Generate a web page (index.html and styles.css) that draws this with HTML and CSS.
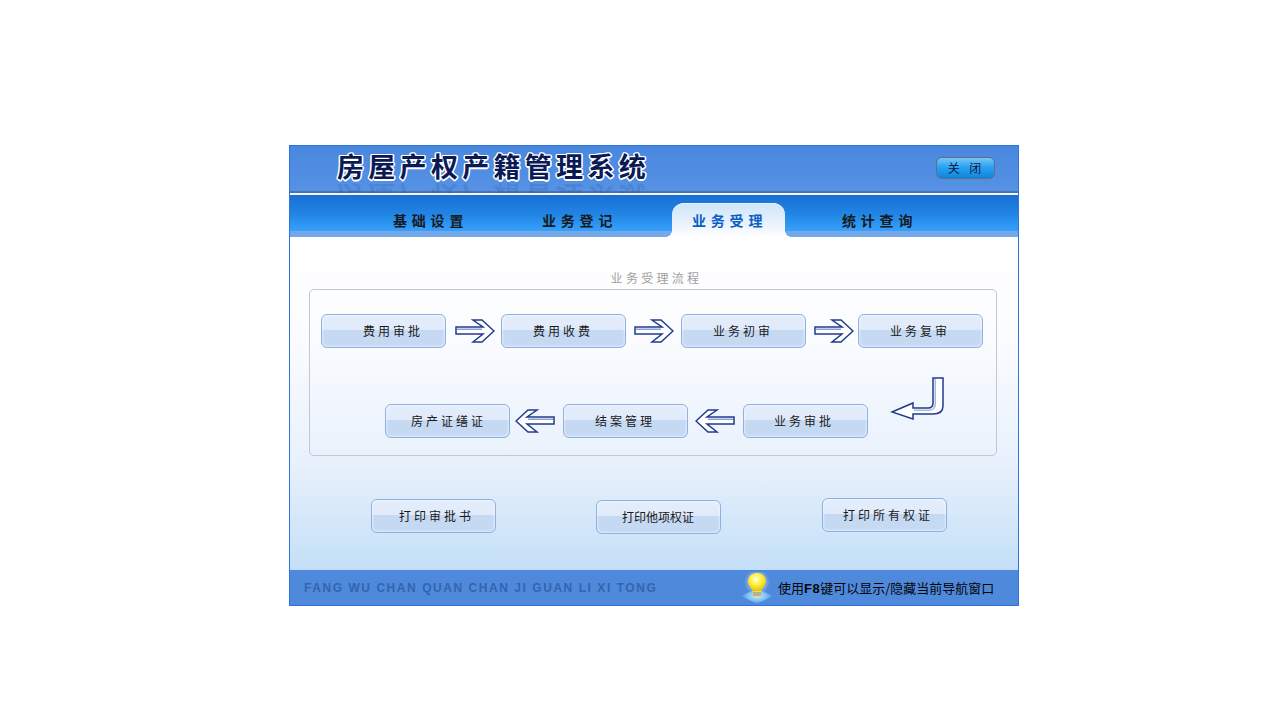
FILE: index.html
```html
<!DOCTYPE html>
<html lang="zh-CN">
<head>
<meta charset="utf-8">
<title>房屋产权产籍管理系统</title>
<link rel="stylesheet" href="styles.css">
</head>
<body>
<svg class="defs" width="0" height="0" aria-hidden="true">
  <symbol id="arrow-right" viewBox="0 0 40 24">
    <path d="M1 8H28L18 1H27L39 12L27 23H18L28 15H1Z" fill="#fff" stroke="#1f3b8c" stroke-width="1.5" stroke-linejoin="miter"/>
    <path d="M2 9.500H27V11H2Z" fill="#8c9fd0"/>
  </symbol>
  <symbol id="arrow-left" viewBox="0 0 40 24">
    <path d="M39 8H12L22 1H13L1 12L13 23H22L12 15H39Z" fill="#fff" stroke="#1f3b8c" stroke-width="1.5" stroke-linejoin="miter"/>
    <path d="M38 9.500H13V11H38Z" fill="#8c9fd0"/>
  </symbol>
</svg>
<div class="window">
  <header class="header">
    <h1 class="title" data-text="房屋产权产籍管理系统">房屋产权产籍管理系统</h1>
    <button class="close">关 闭</button>
  </header>
  <nav class="nav">
    <a class="tab tab-1">基础设置</a>
    <a class="tab tab-2">业务登记</a>
    <a class="tab active">业务受理</a>
    <a class="tab tab-4">统计查询</a>
  </nav>
  <main class="main">
    <div class="panel-title">业务受理流程</div>
    <section class="panel">
      <div class="flow-row">
        <div class="btn p42">费用审批</div>
        <svg class="arrow a1"><use href="#arrow-right"/></svg>
        <div class="btn">费用收费</div>
        <svg class="arrow a2"><use href="#arrow-right"/></svg>
        <div class="btn">业务初审</div>
        <svg class="arrow a3"><use href="#arrow-right"/></svg>
        <div class="btn">业务复审</div>
      </div>
      <div class="flow-row second">
        <div class="btn p26">房产证缮证</div>
        <svg class="arrow a4"><use href="#arrow-left"/></svg>
        <div class="btn">结案管理</div>
        <svg class="arrow a5"><use href="#arrow-left"/></svg>
        <div class="btn p31">业务审批</div>
        <svg class="bent" viewBox="0 0 56 44">
          <path d="M43 2H53V30Q53 38 43 38H23V43L2 36L23 27V32H38Q43 32 43 27Z" fill="#fff" stroke="#1f3b8c" stroke-width="1.500"/>
          <path d="M44.500 3H46V28Q46 34 39 35H24V33.500H38Q44.500 33.500 44.500 28Z" fill="#a9b8de"/>
        </svg>
      </div>
    </section>
    <div class="print-row">
      <div class="btn p28 o1">打印审批书</div>
      <div class="btn p26 tight o2">打印他项权证</div>
      <div class="btn p21 o3">打印所有权证</div>
    </div>
  </main>
  <footer class="footer">
    <span class="pinyin">FANG WU CHAN QUAN CHAN JI GUAN LI XI TONG</span>
    <svg class="bulb" viewBox="0 0 32 32" aria-hidden="true">
      <defs>
        <radialGradient id="glass" cx="45%" cy="35%" r="65%">
          <stop offset="0" stop-color="#fffde0"/>
          <stop offset=".5" stop-color="#fff03a"/>
          <stop offset="1" stop-color="#e5c400"/>
        </radialGradient>
        <radialGradient id="plate">
          <stop offset="0" stop-color="#c4ecff"/>
          <stop offset=".6" stop-color="#7cc0f2"/>
          <stop offset="1" stop-color="#4e89dc"/>
        </radialGradient>
        <radialGradient id="halo">
          <stop offset=".6" stop-color="#fff" stop-opacity=".35"/>
          <stop offset="1" stop-color="#fff" stop-opacity="0"/>
        </radialGradient>
      </defs>
      <circle cx="16" cy="10" r="13" fill="url(#halo)"/>
      <path d="M0 24L16 16L32 24L16 32Z" fill="url(#plate)"/>
      <path d="M16 1C10.500 1 7 5 7 9.500C7 13.500 10.500 15 11.500 19H20.500C21.500 15 25 13.500 25 9.500C25 5 21.500 1 16 1Z" fill="url(#glass)"/>
      <path d="M11.500 19H20.500L20 25Q16 27 12 25Z" fill="#d8d9ae"/>
      <path d="M12 21H20M12 23H20" stroke="#8d9270"/>
    </svg>
    <span class="hint">使用<b>F8</b>键可以显示/隐藏当前导航窗口</span>
  </footer>
</div>
</body>
</html>
```
FILE: styles.css
```css
* { box-sizing: border-box; }
html, body { margin: 0; height: 100%; background: #fff; }
body {
  padding: 145px 0 0 289px;
  font-family: "Liberation Sans", "Noto Sans CJK SC", sans-serif;
  font-size: 12px;
  color: #111;
}
.defs { display: block; }
.window {
  width: 730px;
  height: 461px;
  border: 1px solid #2d73dd;
  display: flex;
  flex-direction: column;
  background: #fff;
}
.header {
  position: relative;
  flex: none;
  height: 49px;
  padding: 0 23px 0 47px;
  display: flex;
  justify-content: space-between;
  align-items: flex-start;
  overflow: hidden;
  background: linear-gradient(#4a87df, #5592e5 92%);
  border-bottom: 2px solid #f2f6fb;
  box-shadow: inset 0 -2px 0 #4a72ae;
}
.title {
  position: relative;
  margin: 6px 0 0;
  font-size: 27px;
  line-height: 32px;
  font-weight: 700;
  letter-spacing: 4.300px;
  white-space: nowrap;
  color: #0b1a55;
  text-shadow: 1.500px 0 0 #fff, -1.500px 0 0 #fff, 0 1.500px 0 #fff, 0 -1.500px 0 #fff,
    1px 1px 0 #fff, -1px 1px 0 #fff, 1px -1px 0 #fff, -1px -1px 0 #fff;
}
.title::after {
  content: attr(data-text);
  position: absolute;
  left: 0;
  top: 27px;
  transform: scaleY(-1);
  opacity: .12;
  text-shadow: none;
  color: #17306e;
}
.close {
  margin-top: 11px;
  width: 59px;
  height: 22px;
  padding: 0;
  border: 1px solid #5d6f86;
  border-radius: 6px;
  background: linear-gradient(#7ac6f7, #2aa2f3 45%, #0f86dc);
  font: 12px/18px "Noto Sans CJK SC", sans-serif;
  color: #10203a;
  letter-spacing: 2px;
  word-spacing: 3px;
}
.nav {
  flex: none;
  height: 42px;
  padding-left: 103px;
  display: flex;
  align-items: flex-end;
  background: linear-gradient(#1a6fd3 0, #2184e4 45%, #36a1fb 36px, #74a8e8 36px, #74a8e8 100%);
}
.tab {
  height: 34px;
  font: 700 14px/34px "Noto Sans CJK SC", sans-serif;
  letter-spacing: 4.800px;
  color: #151a22;
  white-space: nowrap;
}
.tab-1 { width: 149px; }
.tab-2 { width: 130px; }
.tab-4 { margin-left: 57px; }
.active {
  position: relative;
  width: 113px;
  padding-left: 20px;
  color: #0a5fc4;
  border-radius: 12px 12px 0 0;
  background: linear-gradient(#cfe4fa, #e6f1fc 55%, #fff);
  box-shadow: inset 0 1px 0 #e6f1fd;
}
.active::before, .active::after {
  content: "";
  position: absolute;
  bottom: 0;
  width: 6px;
  height: 6px;
}
.active::before {
  left: -6px;
  background: radial-gradient(circle at 0 0, transparent 5.500px, #fff 6px);
}
.active::after {
  right: -6px;
  background: radial-gradient(circle at 100% 0, transparent 5.500px, #fff 6px);
}
.main {
  flex: 1;
  padding: 33px 0 0 19px;
  background: linear-gradient(#fff 0, #fbfcff 30%, #e8f1fc 68%, #c3dff7 100%);
}
.panel-title {
  width: 689px;
  padding-left: 6px;
  text-align: center;
  font: 12px/16px "Noto Sans CJK SC", sans-serif;
  letter-spacing: 3.300px;
  color: #a0a0a0;
}
.panel {
  width: 688px;
  height: 167px;
  margin-top: 3px;
  padding: 24px 0 0 11px;
  border: 1px solid #c2c7d2;
  border-radius: 5px;
}
.flow-row { display: flex; align-items: center; }
.flow-row.second {
  align-items: flex-end;
  margin-top: 28px;
  height: 62px;
  padding-left: 64px;
}
.btn {
  flex: none;
  width: 125px;
  height: 34px;
  padding-left: 31px;
  border: 1px solid #8fb0e3;
  border-radius: 6px;
  background: linear-gradient(#e4edfb 0, #e0eafa 48%, #c5d9f3 48%, #c5d9f3 100%);
  box-shadow: inset 0 0 3px #fff;
  font: 12px/32px "Noto Sans CJK SC", sans-serif;
  letter-spacing: 3px;
  color: #1a1a1a;
  white-space: nowrap;
}
.p42 { padding-left: 41px; }
.p31 { padding-left: 30px; }
.p28 { padding-left: 27px; }
.p26 { padding-left: 25px; }
.p21 { padding-left: 20px; }
.tight { letter-spacing: 0; }
.arrow { flex: none; width: 40px; height: 24px; }
.a1 { margin: 0 6px 0 9px; }
.a2 { margin: 0 7px 0 8px; }
.a3 { margin: 0 4px 0 8px; }
.a4 { margin: 0 8px 5px 5px; }
.a5 { margin: 0 8px 5px 7px; }
.bent {
  flex: none;
  align-self: flex-start;
  width: 56px;
  height: 44px;
  margin-left: 22px;
}
.print-row {
  display: flex;
  align-items: flex-start;
  margin-top: 42px;
  padding-left: 62px;
}
.o1 { margin-top: 1px; }
.o2 { margin: 2px 0 0 100px; }
.o3 { margin-left: 101px; }
.footer {
  flex: none;
  height: 35px;
  padding-left: 14px;
  display: flex;
  align-items: center;
  background: #4e89dc;
}
.pinyin {
  width: 437px;
  font: 700 12px/14px "Liberation Sans", sans-serif;
  letter-spacing: 1.550px;
  color: #3265b0;
  white-space: nowrap;
}
.bulb { flex: none; width: 32px; height: 32px; margin-right: 5px; }
.hint {
  padding-top: 2px;
  font: 13px/16px "Noto Sans CJK SC", sans-serif;
  color: #050505;
  white-space: nowrap;
}
.hint b { font-family: "Liberation Sans", sans-serif; font-weight: 700; letter-spacing: .5px; }
```
